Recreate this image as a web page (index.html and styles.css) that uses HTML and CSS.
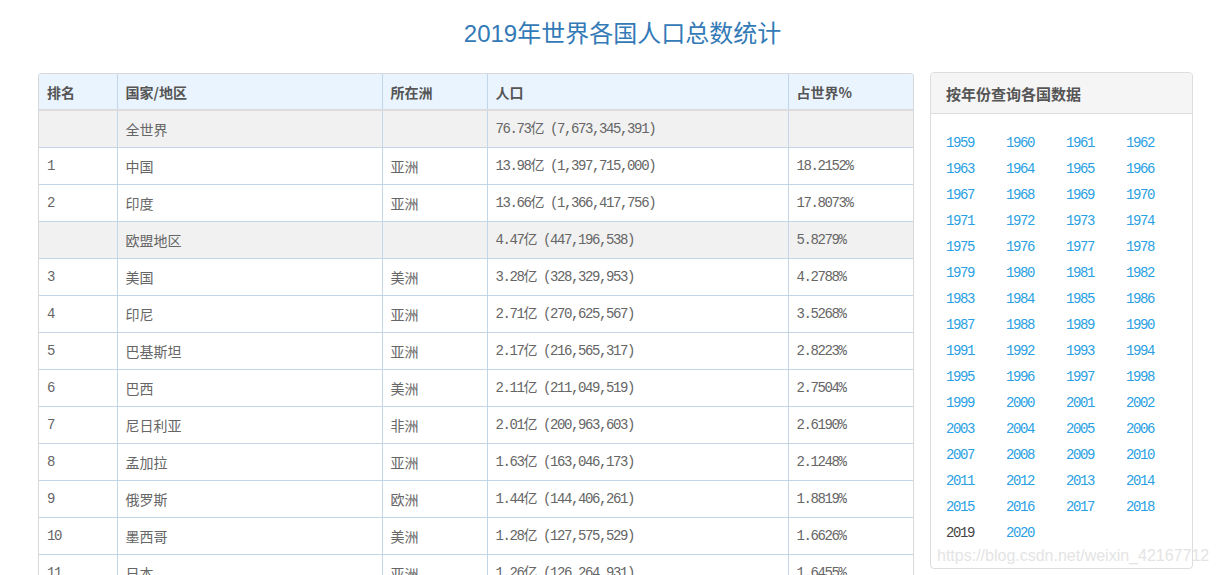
FILE: index.html
```html
<!DOCTYPE html>
<html lang="zh">
<head>
<meta charset="utf-8">
<title>2019年世界各国人口总数统计</title>
<link rel="stylesheet" href="styles.css">
</head>
<body>
<div class="page">
  <h1 class="title">2019年世界各国人口总数统计</h1>
  <div class="main">
    <div class="table-wrap">
      <table class="pop">
        <colgroup>
          <col class="c-rank"><col class="c-name"><col class="c-cont"><col class="c-pop"><col class="c-pct">
        </colgroup>
        <thead>
          <tr><th>排名</th><th>国家/地区</th><th>所在洲</th><th>人口</th><th>占世界%</th></tr>
        </thead>
        <tbody>
          <tr class="grey"><td></td><td>全世界</td><td></td><td class="num">76.73亿 (7,673,345,391)</td><td></td></tr>
          <tr><td class="num">1</td><td>中国</td><td>亚洲</td><td class="num">13.98亿 (1,397,715,000)</td><td class="num">18.2152%</td></tr>
          <tr><td class="num">2</td><td>印度</td><td>亚洲</td><td class="num">13.66亿 (1,366,417,756)</td><td class="num">17.8073%</td></tr>
          <tr class="grey"><td></td><td>欧盟地区</td><td></td><td class="num">4.47亿 (447,196,538)</td><td class="num">5.8279%</td></tr>
          <tr><td class="num">3</td><td>美国</td><td>美洲</td><td class="num">3.28亿 (328,329,953)</td><td class="num">4.2788%</td></tr>
          <tr><td class="num">4</td><td>印尼</td><td>亚洲</td><td class="num">2.71亿 (270,625,567)</td><td class="num">3.5268%</td></tr>
          <tr><td class="num">5</td><td>巴基斯坦</td><td>亚洲</td><td class="num">2.17亿 (216,565,317)</td><td class="num">2.8223%</td></tr>
          <tr><td class="num">6</td><td>巴西</td><td>美洲</td><td class="num">2.11亿 (211,049,519)</td><td class="num">2.7504%</td></tr>
          <tr><td class="num">7</td><td>尼日利亚</td><td>非洲</td><td class="num">2.01亿 (200,963,603)</td><td class="num">2.6190%</td></tr>
          <tr><td class="num">8</td><td>孟加拉</td><td>亚洲</td><td class="num">1.63亿 (163,046,173)</td><td class="num">2.1248%</td></tr>
          <tr><td class="num">9</td><td>俄罗斯</td><td>欧洲</td><td class="num">1.44亿 (144,406,261)</td><td class="num">1.8819%</td></tr>
          <tr><td class="num">10</td><td>墨西哥</td><td>美洲</td><td class="num">1.28亿 (127,575,529)</td><td class="num">1.6626%</td></tr>
          <tr><td class="num">11</td><td>日本</td><td>亚洲</td><td class="num">1.26亿 (126,264,931)</td><td class="num">1.6455%</td></tr>
        </tbody>
      </table>
    </div>
    <aside class="panel">
      <div class="panel-head">按年份查询各国数据</div>
      <div class="panel-body">
        <div class="years">
          <a href="#">1959</a><a href="#">1960</a><a href="#">1961</a><a href="#">1962</a>
          <a href="#">1963</a><a href="#">1964</a><a href="#">1965</a><a href="#">1966</a>
          <a href="#">1967</a><a href="#">1968</a><a href="#">1969</a><a href="#">1970</a>
          <a href="#">1971</a><a href="#">1972</a><a href="#">1973</a><a href="#">1974</a>
          <a href="#">1975</a><a href="#">1976</a><a href="#">1977</a><a href="#">1978</a>
          <a href="#">1979</a><a href="#">1980</a><a href="#">1981</a><a href="#">1982</a>
          <a href="#">1983</a><a href="#">1984</a><a href="#">1985</a><a href="#">1986</a>
          <a href="#">1987</a><a href="#">1988</a><a href="#">1989</a><a href="#">1990</a>
          <a href="#">1991</a><a href="#">1992</a><a href="#">1993</a><a href="#">1994</a>
          <a href="#">1995</a><a href="#">1996</a><a href="#">1997</a><a href="#">1998</a>
          <a href="#">1999</a><a href="#">2000</a><a href="#">2001</a><a href="#">2002</a>
          <a href="#">2003</a><a href="#">2004</a><a href="#">2005</a><a href="#">2006</a>
          <a href="#">2007</a><a href="#">2008</a><a href="#">2009</a><a href="#">2010</a>
          <a href="#">2011</a><a href="#">2012</a><a href="#">2013</a><a href="#">2014</a>
          <a href="#">2015</a><a href="#">2016</a><a href="#">2017</a><a href="#">2018</a>
          <span class="current">2019</span><a href="#">2020</a>
        </div>
      </div>
    </aside>
  </div>
  <div class="watermark">https://blog.csdn.net/weixin_42167712</div>
</div>
</body>
</html>
```
FILE: styles.css
```css
html, body {
  margin: 0;
  padding: 0;
  background: #fff;
}
body {
  font-family: "Noto Sans CJK SC", "Liberation Sans", sans-serif;
  font-size: 14px;
  color: #555;
}
.page {
  position: relative;
  padding: 0 25px 0 38px;
}
.title {
  margin: 0;
  padding: 19px 0 0 14px;
  height: 54px;
  box-sizing: border-box;
  text-align: center;
  font-family: "Liberation Sans", "Noto Sans CJK SC", sans-serif;
  font-weight: normal;
  font-size: 24px;
  line-height: 30px;
  color: #337ab7;
}
.main {
  display: flex;
  align-items: flex-start;
  gap: 16px;
}
.table-wrap {
  width: 876px;
  flex: none;
  margin-top: 19px;
  border: 1px solid #d8d8d8;
  border-radius: 3px;
  box-sizing: border-box;
  overflow: hidden;
}
.pop {
  width: 100%;
  border-collapse: collapse;
  table-layout: fixed;
}
.c-rank { width: 78px; }
.c-name { width: 265px; }
.c-cont { width: 105px; }
.c-pop { width: 301px; }
.c-pct { width: auto; }
.pop th, .pop td {
  text-align: left;
  padding: 8px 8px;
  line-height: 20px;
  height: 20px;
  border: 1px solid #c3d5e8;
  white-space: nowrap;
}
.pop tr > :first-child { border-left: none; }
.pop tr > :last-child { border-right: none; }
.pop thead th {
  border-top: none;
  background: #eaf4fe;
  color: #555;
  font-weight: bold;
  font-size: 14px;
  border-bottom: 2px solid #dcdcdc;
  padding-top: 8px;
  padding-bottom: 7px;
}
.pop td {
  color: #666;
  font-weight: normal;
}
.pop tr.grey td {
  background: #f1f1f1;
}
.num {
  font-family: "Liberation Mono", "Noto Sans CJK SC", monospace;
  letter-spacing: -1.4px;
}
.panel {
  width: 263px;
  flex: none;
  margin-top: 18px;
  border: 1px solid #ddd;
  border-radius: 4px;
  box-sizing: border-box;
  height: 497px;
  overflow: hidden;
}
.panel-head {
  background: #f5f5f5;
  border-bottom: 1px solid #ddd;
  padding: 10px 15px;
  height: 41px;
  box-sizing: border-box;
  font-weight: bold;
  font-size: 15px;
  line-height: 21px;
  color: #555;
}
.panel-body {
  padding: 16px 15px 24px;
}
.years {
  display: grid;
  grid-template-columns: repeat(4, 60px);
}
.years a, .years span {
  line-height: 26px;
  font-family: "Liberation Mono", monospace;
  font-size: 14px;
  letter-spacing: -1.4px;
  text-decoration: none;
  color: #2b9fe3;
}
.years .current {
  color: #444;
}
.watermark {
  position: absolute;
  left: 937px;
  top: 545px;
  font-family: "Liberation Sans", sans-serif;
  font-size: 16px;
  line-height: 22px;
  color: #e4e4e4;
  white-space: nowrap;
}
```
